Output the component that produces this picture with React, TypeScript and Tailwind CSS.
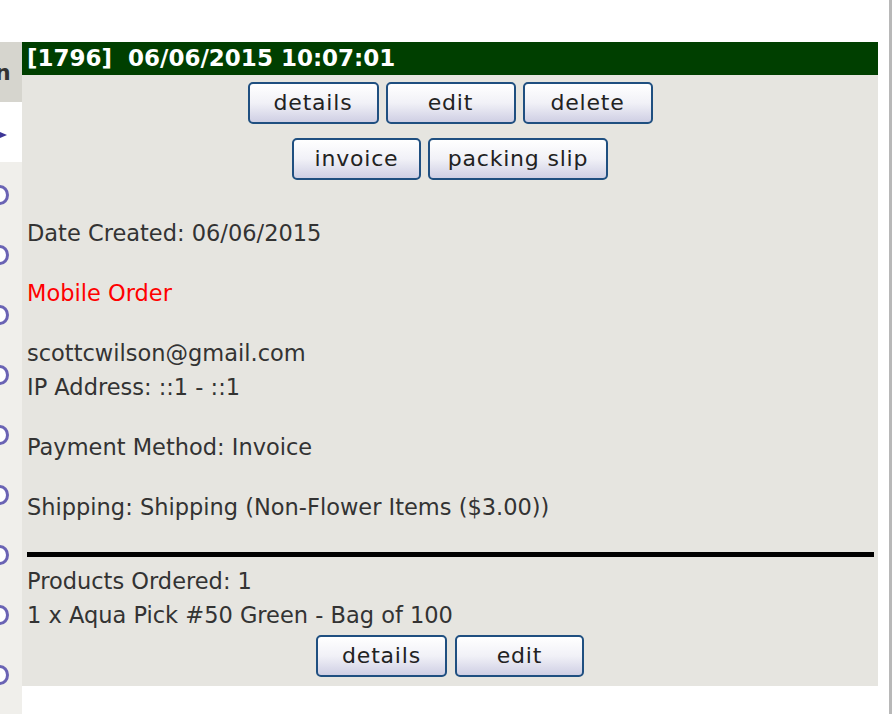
import React from "react";

const font = { fontFamily: '"DejaVu Sans", Verdana, sans-serif' };

const Btn: React.FC<{ label: string; w: string }> = ({ label, w }) => (
  <button
    className={`${w} h-[42px] rounded-[5px] border-2 border-[#1f4f80] bg-gradient-to-b from-white via-[#f1f1f7] to-[#cfcfe4] text-[22px] leading-none text-[#222] tracking-[0.8px] pb-[1px]`}
  >
    {label}
  </button>
);

const Circle = () => (
  <div className="h-[60px] flex items-center">
    <svg width="10" height="22" viewBox="0 0 10 22">
      <ellipse cx="0" cy="11" rx="7.5" ry="8.5" fill="#fff" stroke="#6a63b4" strokeWidth="3" />
    </svg>
  </div>
);

export default function App() {
  return (
    <div className="w-[894px] h-[714px] bg-white overflow-hidden relative" style={font}>
      <div className="flex pt-[42px] h-full">
        {/* left strip from neighbouring column */}
        <div className="w-[22px] shrink-0 flex flex-col overflow-hidden">
          <div className="h-[60px] bg-[#d6d5ce] flex items-center pt-[2px]">
            <span className="ml-[-5px] text-[22px] font-bold text-[#333] leading-none">n</span>
          </div>
          <div className="h-[60px] bg-white flex items-center pt-[6px]">
            <svg width="10" height="12" viewBox="0 0 10 12">
              <path d="M0 3 L7 6 L0 9 Z" fill="#3d3596" />
            </svg>
          </div>
          <div className="flex-1 bg-[#f0efeb] pt-[3px]">
            {Array.from({ length: 9 }).map((_, i) => (
              <Circle key={i} />
            ))}
          </div>
        </div>

        <div className="w-[856px] shrink-0 self-start bg-[#e6e5e0] pb-[9px]">
          <div className="h-[33px] bg-[#003f00] px-[5px] flex items-center">
            <span className="text-white font-bold text-[23px] leading-none whitespace-pre">
              [1796]  06/06/2015 10:07:01
            </span>
          </div>

          <div className="flex flex-col items-center gap-[14px] pt-[7px]">
            <div className="flex gap-[7px]">
              <Btn label="details" w="w-[131px]" />
              <Btn label="edit" w="w-[130px]" />
              <Btn label="delete" w="w-[130px]" />
            </div>
            <div className="flex gap-[7px]">
              <Btn label="invoice" w="w-[129px]" />
              <Btn label="packing slip" w="w-[180px]" />
            </div>
          </div>

          <div className="px-[5px] pt-[36px] text-[22.5px] leading-[34px] text-[#333]">
            <p>Date Created: 06/06/2015</p>
            <p className="mt-[26px] text-[#ff0000]">Mobile Order</p>
            <p className="mt-[26px]">scottcwilson@gmail.com</p>
            <p>IP Address: ::1 - ::1</p>
            <p className="mt-[26px]">Payment Method: Invoice</p>
            <p className="mt-[26px]">Shipping: Shipping (Non-Flower Items ($3.00))</p>
            <div className="mt-[28px] mr-[-1px] h-[5px] bg-black" />
            <p className="mt-[7px]">Products Ordered: 1</p>
            <p>1 x Aqua Pick #50 Green - Bag of 100</p>
          </div>

          <div className="flex justify-center gap-[8px] pt-[3px]">
            <Btn label="details" w="w-[131px]" />
            <Btn label="edit" w="w-[129px]" />
          </div>
        </div>

        <div className="flex-1" />
      </div>
      <div className="absolute top-0 right-[2px] w-[3px] h-full bg-[#b8b8b8]" />
    </div>
  );
}
